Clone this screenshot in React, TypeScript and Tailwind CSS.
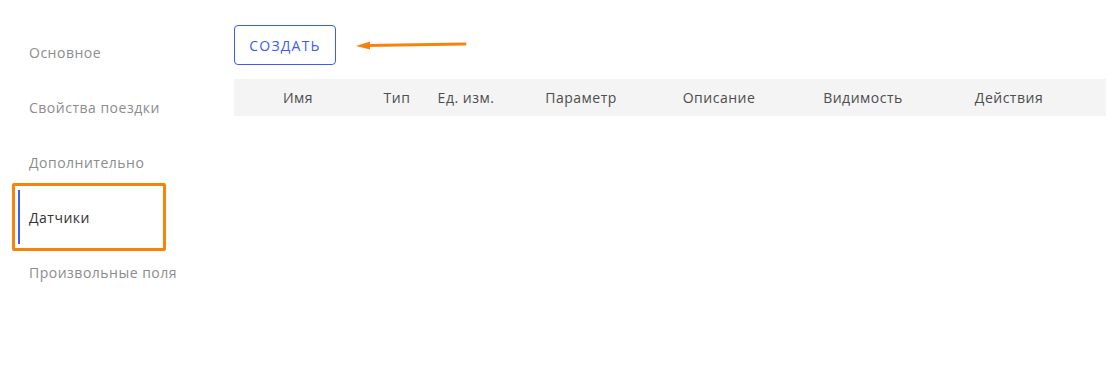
import React from "react";

const tabs = [
  "Основное",
  "Свойства поездки",
  "Дополнительно",
  "Датчики",
  "Произвольные поля",
];

const columns = [
  { title: "Имя", w: "w-[128px]" },
  { title: "Тип", w: "w-[70px]" },
  { title: "Ед. изм.", w: "w-[68px]" },
  { title: "Параметр", w: "w-[162px]" },
  { title: "Описание", w: "w-[114px]" },
  { title: "Видимость", w: "w-[174px]" },
  { title: "Действия", w: "w-[118px]" },
];

export default function App() {
  const active = "Датчики";

  return (
    <div className="flex h-[376px] w-[1120px] bg-white font-['Open_Sans',sans-serif]">
      {/* side tabs */}
      <nav className="flex w-[234px] shrink-0 flex-col pt-[25px]">
        {tabs.map((t) => (
          <div key={t} className="relative flex h-[55px] items-center pl-[18px]">
            {t === active && (
              <>
                <span className="absolute left-[18px] top-0 h-[54px] w-[2px] bg-[#3b5bfd]" />
                <span className="absolute left-[12px] top-[-7px] h-[68px] w-[154px] rounded-[2px] border-[3px] border-[#f7830b]" />
              </>
            )}
            <span
              className={
                "pl-[11px] text-[14px] tracking-[0.5px] " +
                (t === active ? "font-medium text-[#333333]" : "text-[#8c8c8c]")
              }
            >
              {t}
            </span>
          </div>
        ))}
      </nav>

      {/* content */}
      <div className="flex w-[872px] flex-col pt-[25px]">
        <div className="flex items-center">
          <button className="flex h-[40px] w-[102px] items-center justify-center rounded-[4px] border border-[#3b5bfd] text-[14px] font-medium tracking-[1.2px] text-[#3b5bfd]">
            СОЗДАТЬ
          </button>
          <svg width="120" height="14" viewBox="0 0 120 14" className="ml-[18px]">
            <path d="M14 7.5 L111 6" stroke="#f7830b" strokeWidth="3" strokeLinecap="round" />
            <path d="M2 8 L16 3.5 L16 11.5 Z" fill="#f7830b" />
          </svg>
        </div>

        <div className="mt-[14px] flex h-[37px] items-center bg-[#f4f4f4] text-[14px] tracking-[0.5px] text-[#4d4d4d]">
          {columns.map((c) => (
            <div key={c.title} className={c.w + " text-center"}>
              {c.title}
            </div>
          ))}
        </div>
      </div>
    </div>
  );
}
